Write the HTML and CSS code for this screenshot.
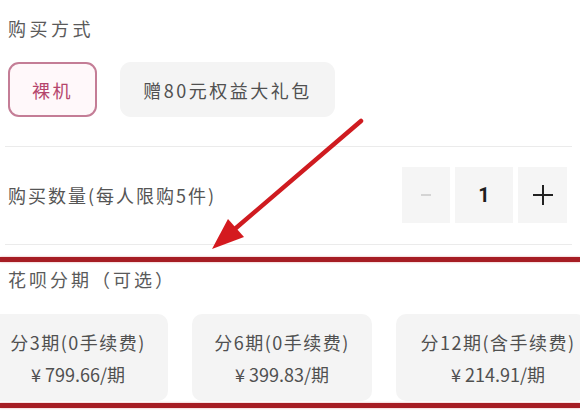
FILE: index.html
```html
<!DOCTYPE html>
<html lang="zh-CN">
<head>
<meta charset="utf-8">
<title>购买选项</title>
<link rel="stylesheet" href="styles.css">
</head>
<body>
<div class="page">
  <div class="title title-first">购买方式</div>
  <div class="options">
    <div class="opt opt-active">裸机</div>
    <div class="opt opt-gift">赠80元权益大礼包</div>
  </div>
  <div class="divider"></div>
  <div class="qty-row">
    <div class="qty-label">购买数量(每人限购5件)</div>
    <div class="stepper">
      <div class="step step-minus"><span class="minus-bar"></span></div>
      <div class="step step-num">1</div>
      <div class="step step-plus"><span class="plus-h"></span><span class="plus-v"></span></div>
    </div>
  </div>
  <div class="divider"></div>
  <div class="red-line red-top"></div>
  <div class="title title-install">花呗分期（可选）</div>
  <div class="cards">
    <div class="card"><div class="card-line">分3期(0手续费)</div><div class="card-price">¥ 799.66/期</div></div>
    <div class="card"><div class="card-line">分6期(0手续费)</div><div class="card-price">¥ 399.83/期</div></div>
    <div class="card card-last"><div class="card-line">分12期(含手续费)</div><div class="card-price">¥ 214.91/期</div></div>
  </div>
  <div class="red-line red-bottom"></div>
  <svg class="arrow" width="580" height="416" viewBox="0 0 580 416">
    <line x1="361" y1="121" x2="236" y2="228" stroke="#cf1b20" stroke-width="4.5" stroke-linecap="round"/>
    <polygon points="212,249 228,219 244,237" fill="#d41a1f"/>
  </svg>
</div>
</body>
</html>
```
FILE: styles.css
```css
html, body {
  margin: 0;
  padding: 0;
  background: #ffffff;
}
.page {
  position: relative;
  width: 580px;
  height: 416px;
  overflow: hidden;
  display: flex;
  flex-direction: column;
  font-family: "Noto Sans CJK SC", "Noto Sans", sans-serif;
  color: #555555;
}
.title {
  font-size: 18px;
  line-height: 24px;
  letter-spacing: 3.5px;
  padding-left: 8px;
  color: #5a5a5a;
}
.title-first {
  margin-top: 16px;
}
.options {
  display: flex;
  gap: 23px;
  margin-top: 22px;
  padding-left: 8px;
}
.opt {
  height: 55px;
  box-sizing: border-box;
  border-radius: 11px;
  display: flex;
  align-items: center;
  justify-content: center;
  font-size: 18px;
  letter-spacing: 2.5px;
}
.opt-active {
  width: 89px;
  border: 2px solid #c47d96;
  background: #fff8fa;
  color: #b5456c;
}
.opt-gift {
  width: 215px;
  background: #f4f4f4;
  color: #505050;
}
.divider {
  height: 1px;
  background: #ebebeb;
  margin-left: 5px;
  margin-right: 8px;
}
.options + .divider {
  margin-top: 29px;
}
.qty-row {
  display: flex;
  align-items: center;
  justify-content: space-between;
  padding: 20px 13px 21px 8px;
}
.qty-label {
  font-size: 18px;
  letter-spacing: 2px;
  color: #555555;
}
.stepper {
  display: flex;
  gap: 5px;
  height: 56px;
}
.step {
  background: #f5f5f5;
  display: flex;
  align-items: center;
  justify-content: center;
  position: relative;
}
.step-minus {
  width: 48px;
}
.minus-bar {
  width: 10px;
  height: 2px;
  background: #d4d4d4;
}
.step-num {
  width: 58px;
  font-family: "Roboto", "Liberation Sans", sans-serif;
  font-weight: 700;
  font-size: 20px;
  color: #1e1e1e;
}
.step-plus {
  width: 49px;
}
.plus-h {
  position: absolute;
  width: 20px;
  height: 2px;
  background: #222222;
}
.plus-v {
  position: absolute;
  width: 2px;
  height: 20px;
  background: #222222;
}
.red-line {
  height: 5px;
  background: #a61d24;
  box-shadow: 0 0 2px rgba(200, 40, 50, 0.5);
}
.red-top {
  margin-top: 12px;
}
.title-install {
  margin-top: 5px;
  letter-spacing: 3px;
}
.cards {
  display: flex;
  gap: 24px;
  margin-top: 23px;
  margin-left: -12px;
}
.card {
  flex: 0 0 180px;
  height: 87px;
  box-sizing: border-box;
  padding-top: 16px;
  border-radius: 10px;
  background: #f4f4f4;
  display: flex;
  flex-direction: column;
  align-items: center;
  gap: 8px;
  white-space: nowrap;
}
.card-last {
  flex-basis: 190px;
  padding-left: 14px;
}
.card-line {
  font-size: 18px;
  line-height: 24px;
  letter-spacing: 1.5px;
  color: #505050;
}
.card-price {
  font-size: 18px;
  line-height: 24px;
  color: #505050;
}
.red-bottom {
  margin-top: 2px;
}
.arrow {
  position: absolute;
  left: 0;
  top: 0;
  pointer-events: none;
}
```
